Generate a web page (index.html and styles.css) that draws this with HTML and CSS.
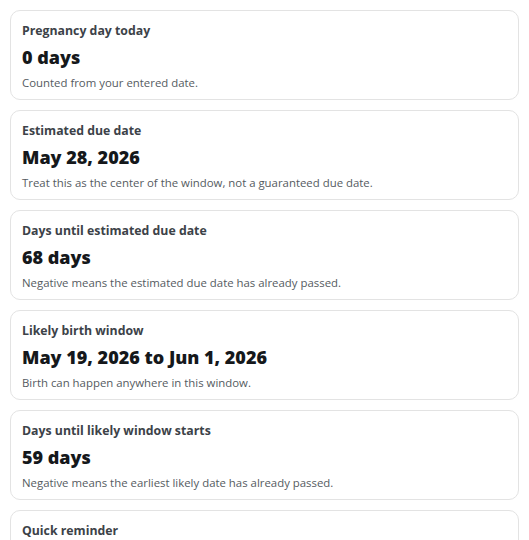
FILE: index.html
```html
<!DOCTYPE html>
<html lang="en">
<head>
<meta charset="utf-8">
<title>Pregnancy summary</title>
<link rel="stylesheet" href="styles.css">
</head>
<body>
<main class="list">
  <section class="card">
    <div class="label">Pregnancy day today</div>
    <div class="value">0 days</div>
    <div class="note">Counted from your entered date.</div>
  </section>
  <section class="card">
    <div class="label">Estimated due date</div>
    <div class="value">May 28, 2026</div>
    <div class="note">Treat this as the center of the window, not a guaranteed due date.</div>
  </section>
  <section class="card">
    <div class="label">Days until estimated due date</div>
    <div class="value">68 days</div>
    <div class="note">Negative means the estimated due date has already passed.</div>
  </section>
  <section class="card">
    <div class="label">Likely birth window</div>
    <div class="value">May 19, 2026 to Jun 1, 2026</div>
    <div class="note">Birth can happen anywhere in this window.</div>
  </section>
  <section class="card">
    <div class="label">Days until likely window starts</div>
    <div class="value">59 days</div>
    <div class="note">Negative means the earliest likely date has already passed.</div>
  </section>
  <section class="card">
    <div class="label">Quick reminder</div>
    <div class="value">&nbsp;</div>
    <div class="note">&nbsp;</div>
  </section>
</main>
</body>
</html>
```

FILE: styles.css
```css
html, body {
  margin: 0;
  padding: 0;
  background: #ffffff;
}
body {
  font-family: "Open Sans", "Noto Sans", sans-serif;
  color: #1f2328;
}
.list {
  display: flex;
  flex-direction: column;
  gap: 10px;
  padding: 10px;
}
.card {
  border: 1px solid #e3e3e3;
  border-radius: 10px;
  padding: 11px 11px 0;
  display: flex;
  flex-direction: column;
  height: 77px;
}
.label {
  font-size: 12.3px;
  font-weight: 700;
  color: #3c4248;
  line-height: 18px;
}
.value {
  font-size: 18px;
  font-weight: 800;
  color: #15181b;
  line-height: 24px;
  margin-top: 5px;
}
.note {
  font-size: 11.4px;
  color: #555b61;
  line-height: 17px;
  margin-top: 5px;
}
```
